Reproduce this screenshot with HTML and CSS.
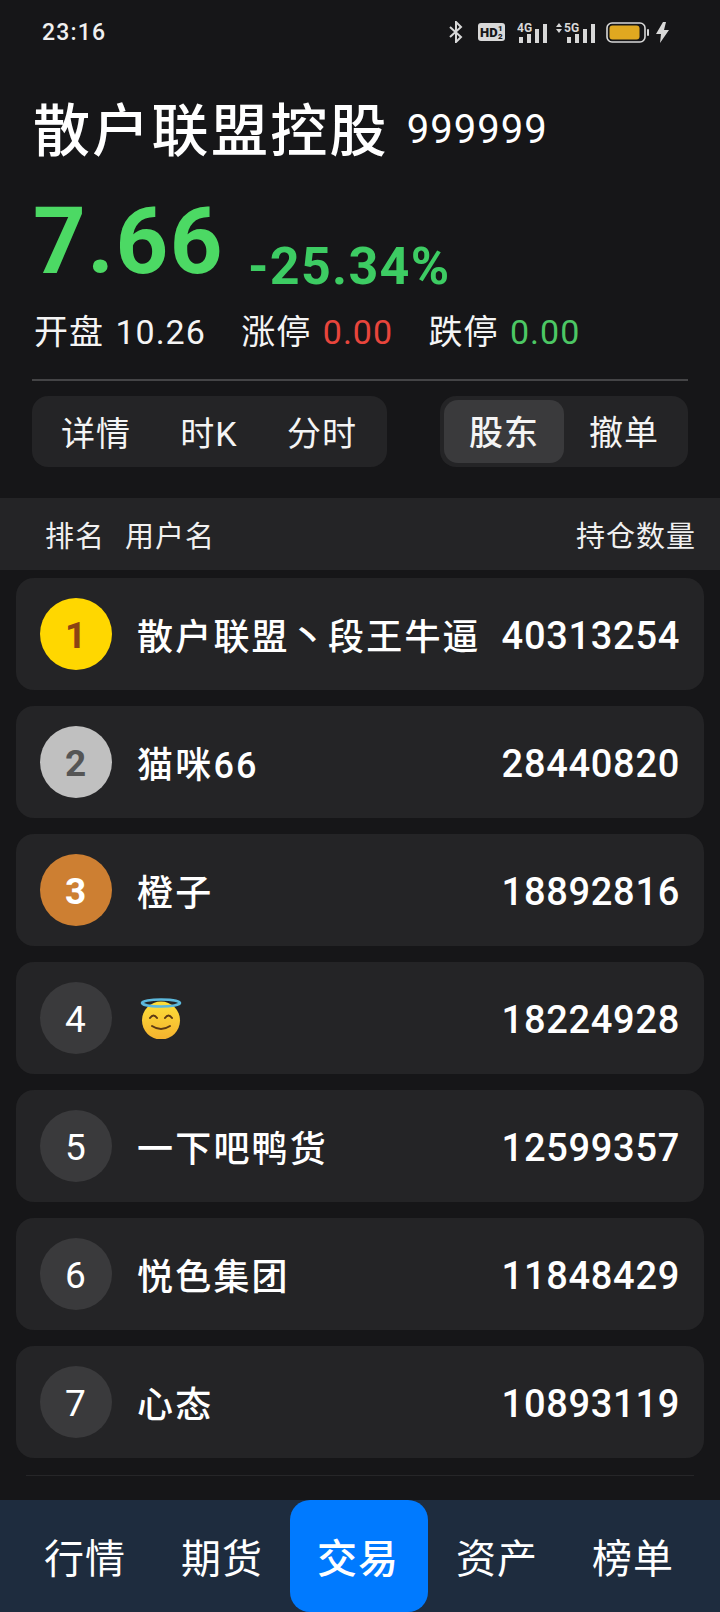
FILE: index.html
```html
<!DOCTYPE html>
<html lang="zh-CN">
<head>
    <meta charset="UTF-8" />
    <meta name="viewport" content="width=device-width, initial-scale=1.0" />
    <title>股东</title>
    <link rel="stylesheet" href="styles.css">
</head>
<body>
    <div class="statusbar">
        <span class="time">23:16</span>
        <div class="status-icons">
            <svg class="icon-bt" width="14" height="22" viewBox="0 0 14 22" fill="none" stroke="#d8d8d8" stroke-width="2">
                <path d="M1 6l11 10-5 5V1l5 5L1 16"/>
            </svg>
            <svg class="icon-hd" width="27" height="18" viewBox="0 0 27 18">
                <rect width="27" height="18" rx="3" fill="#d8d8d8"/>
                <text x="2" y="14" class="hd-text">HD</text>
                <text x="20" y="8" class="hd-small">1</text>
                <text x="20" y="16" class="hd-small">2</text>
            </svg>
            <svg class="icon-4g" width="31" height="21" viewBox="0 0 31 21" fill="#d8d8d8">
                <text x="0" y="10" class="net-text">4G</text>
                <rect x="2" y="15" width="4" height="6"/>
                <rect x="10" y="12" width="4" height="9"/>
                <rect x="18" y="7" width="4" height="14"/>
                <rect x="26" y="2" width="4" height="19"/>
            </svg>
            <svg class="icon-5g" width="40" height="21" viewBox="0 0 40 21" fill="#d8d8d8">
                <path d="M0 5l3-4 3 4zM0 7h6l-3 4z"/>
                <text x="8" y="10" class="net-text">5G</text>
                <rect x="11" y="15" width="4" height="6"/>
                <rect x="19" y="12" width="4" height="9"/>
                <rect x="27" y="7" width="4" height="14"/>
                <rect x="35" y="2" width="4" height="19"/>
            </svg>
            <svg class="icon-battery" width="44" height="21" viewBox="0 0 44 21">
                <rect x="1" y="1" width="38" height="19" rx="5" fill="none" stroke="#d8d8d8" stroke-width="1.6"/>
                <rect x="3.5" y="3.5" width="30" height="14" rx="3" fill="#e0a820"/>
                <rect x="41" y="7" width="2" height="7" rx="1" fill="#d8d8d8"/>
            </svg>
            <svg class="icon-bolt" width="13" height="21" viewBox="0 0 13 21" fill="#d8d8d8">
                <path d="M7 0L0 12h5l-1 9 9-13H8l2-8z"/>
            </svg>
        </div>
    </div>

    <div class="stock-head">
        <div class="stock-title">
            <span class="stock-name">散户联盟控股</span>
            <span class="stock-code">999999</span>
        </div>
        <div class="stock-price">
            <span class="price">7.66</span>
            <span class="change">-25.34%</span>
        </div>
        <div class="stock-stats">
            <span class="stat">开盘 <span class="stat-val">10.26</span></span>
            <span class="stat">涨停 <span class="stat-val red">0.00</span></span>
            <span class="stat">跌停 <span class="stat-val green">0.00</span></span>
        </div>
    </div>

    <div class="tabs">
        <div class="tab-group tab-left">
            <span class="tab">详情</span>
            <span class="tab">时K</span>
            <span class="tab">分时</span>
        </div>
        <div class="tab-group tab-right">
            <span class="tab active">股东</span>
            <span class="tab">撤单</span>
        </div>
    </div>

    <div class="table-head">
        <span class="th-rank">排名</span>
        <span class="th-user">用户名</span>
        <span class="th-qty">持仓数量</span>
    </div>

    <ul class="holders">
        <li class="holder">
            <span class="rank gold">1</span>
            <span class="name">散户联盟丶段王牛逼</span>
            <span class="qty">40313254</span>
        </li>
        <li class="holder">
            <span class="rank silver">2</span>
            <span class="name">猫咪66</span>
            <span class="qty">28440820</span>
        </li>
        <li class="holder">
            <span class="rank bronze">3</span>
            <span class="name">橙子</span>
            <span class="qty">18892816</span>
        </li>
        <li class="holder">
            <span class="rank">4</span>
            <span class="name">
                <svg class="emoji" width="42" height="42" viewBox="0 0 42 42">
                    <defs>
                        <linearGradient id="face" x1="0" y1="0" x2="0" y2="1">
                            <stop offset="0" stop-color="#fde03a"/>
                            <stop offset="1" stop-color="#f5b22e"/>
                        </linearGradient>
                    </defs>
                    <circle cx="21" cy="23.500" r="19" fill="url(#face)"/>
                    <ellipse cx="21" cy="6" rx="19" ry="3.500" fill="none" stroke="#5cb8dc" stroke-width="2.600"/>
                    <path d="M10 21q3.500-5 7 0M25 21q3.500-5 7 0" fill="none" stroke="#5d3a14" stroke-width="2" stroke-linecap="round"/>
                    <path d="M12 29q9 6 18 0" fill="none" stroke="#5d3a14" stroke-width="2" stroke-linecap="round"/>
                </svg>
            </span>
            <span class="qty">18224928</span>
        </li>
        <li class="holder">
            <span class="rank">5</span>
            <span class="name">一下吧鸭货</span>
            <span class="qty">12599357</span>
        </li>
        <li class="holder">
            <span class="rank">6</span>
            <span class="name">悦色集团</span>
            <span class="qty">11848429</span>
        </li>
        <li class="holder">
            <span class="rank">7</span>
            <span class="name">心态</span>
            <span class="qty">10893119</span>
        </li>
    </ul>

    <div class="list-end"></div>

    <div class="bottom-nav">
        <span class="nav-item">行情</span>
        <span class="nav-item">期货</span>
        <span class="nav-item active">交易</span>
        <span class="nav-item">资产</span>
        <span class="nav-item">榜单</span>
    </div>
</body>
</html>
```

FILE: styles.css
```css
* {
    box-sizing: border-box;
    margin: 0;
    padding: 0;
}

body {
    width: 720px;
    height: 1612px;
    overflow: hidden;
    display: flex;
    flex-direction: column;
    background: #161618;
    color: #fff;
    font-family: Roboto, "Noto Sans CJK SC", sans-serif;
    letter-spacing: 1px;
}

.statusbar {
    height: 64px;
    padding: 0 51px 0 42px;
    display: flex;
    justify-content: space-between;
    align-items: center;
}

.time {
    font-size: 23px;
    font-weight: 500;
    letter-spacing: 1.2px;
    color: #f0f0f0;
}

.status-icons {
    display: flex;
    align-items: center;
    gap: 8px;
}

.icon-bt {
    margin-right: 7px;
}

.icon-hd {
    margin-right: 4px;
}

.icon-5g {
    margin-right: 2px;
}

.icon-bolt {
    margin-left: -2px;
}

.hd-text {
    font-size: 13px;
    font-weight: 900;
    fill: #161618;
    letter-spacing: 0;
}

.hd-small {
    font-size: 8px;
    font-weight: 900;
    fill: #161618;
    letter-spacing: 0;
}

.net-text {
    font-size: 12px;
    font-weight: 700;
    letter-spacing: 0;
}

.stock-head {
    padding: 0 32px;
}

.stock-title {
    height: 70px;
    margin-top: 27px;
    padding-left: 1px;
    display: flex;
    align-items: center;
    gap: 18px;
}

.stock-name {
    font-size: 57px;
    font-weight: 500;
    letter-spacing: 2.300px;
}

.stock-code {
    padding-top: 6px;
    font-size: 40px;
    letter-spacing: 1px;
}

.stock-price {
    height: 104px;
    margin-top: 29px;
    padding-left: 1px;
    display: flex;
    align-items: flex-start;
    gap: 24px;
    color: #4cd964;
}

.price {
    font-size: 92px;
    font-weight: 700;
    line-height: 104px;
    letter-spacing: 1.500px;
}

.change {
    margin-top: 47px;
    font-size: 52px;
    font-weight: 700;
    line-height: 60px;
    letter-spacing: 1.300px;
    color: #3dcc63;
}

.stock-stats {
    margin-top: 16px;
    padding: 0 0 25px 2px;
    display: flex;
    align-items: center;
    gap: 35.500px;
    border-bottom: 2px solid #444446;
}

.stat {
    font-size: 34px;
    line-height: 44px;
    color: #f4f4f4;
}

.stat-val {
    font-size: 34px;
    margin-left: 2px;
}

.red {
    color: #e8453c;
}

.green {
    color: #4cc764;
}

.tabs {
    margin-top: 15px;
    padding: 0 32px;
    display: flex;
    justify-content: space-between;
}

.tab-group {
    height: 71px;
    display: flex;
    align-items: center;
    background: #242426;
    border-radius: 16px;
}

.tab-left {
    width: 355px;
    padding: 0 14px 0 13px;
    justify-content: space-between;
}

.tab-left .tab {
    padding: 0 16px;
}

.tab-right {
    width: 248px;
    padding: 4px;
}

.tab {
    font-size: 34px;
    color: #f4f4f4;
}

.tab-right .tab {
    width: 120px;
    height: 63px;
    line-height: 66px;
    text-align: center;
    border-radius: 14px;
}

.tab-right .tab.active {
    background: #3a3a3c;
    font-weight: 500;
}

.table-head {
    margin-top: 31px;
    height: 72px;
    padding: 0 24px 0 45px;
    display: flex;
    align-items: center;
    background: #242426;
    font-size: 29px;
    color: #f0f0f0;
}

.th-user {
    margin-left: 20px;
}

.th-qty {
    margin-left: auto;
}

.holders {
    list-style: none;
    margin-top: 8px;
    padding: 0 16px;
    display: flex;
    flex-direction: column;
    gap: 16px;
}

.holder {
    height: 112px;
    padding: 0 24px;
    display: flex;
    align-items: center;
    background: #242426;
    border-radius: 18px;
}

.rank {
    width: 72px;
    height: 72px;
    flex: none;
    padding-top: 2px;
    display: flex;
    align-items: center;
    justify-content: center;
    border-radius: 50%;
    background: #3a3a3c;
    font-size: 37px;
}

.rank.gold {
    background: #ffd700;
    color: #8b4513;
    font-weight: 700;
}

.rank.silver {
    background: #c0c0c0;
    color: #555;
    font-weight: 700;
}

.rank.bronze {
    background: #cd7f32;
    color: #fff;
    font-weight: 700;
}

.name {
    flex: 1;
    margin-left: 25px;
    font-size: 36px;
    font-weight: 500;
    letter-spacing: 2.200px;
    white-space: nowrap;
    display: flex;
    align-items: center;
}

.qty {
    padding-top: 3px;
    font-size: 38px;
    font-weight: 500;
    letter-spacing: 0.700px;
}

.emoji {
    margin-left: 3px;
}

.list-end {
    margin: 17px 26px 0;
    height: 1px;
    background: #262628;
}

.bottom-nav {
    margin-top: auto;
    height: 112px;
    padding: 0 14px;
    display: flex;
    background: #1e2c3e;
}

.nav-item {
    width: 138px;
    display: flex;
    align-items: center;
    justify-content: center;
    font-size: 40px;
    letter-spacing: 1px;
    border-radius: 20px;
}

.nav-item:nth-child(1) {
    padding-left: 4px;
}

.nav-item:nth-child(2) {
    padding-left: 2px;
}

.nav-item:nth-child(5) {
    padding-right: 4px;
}

.nav-item.active {
    padding-right: 2px;
    background: #007aff;
    font-weight: 500;
}
```
